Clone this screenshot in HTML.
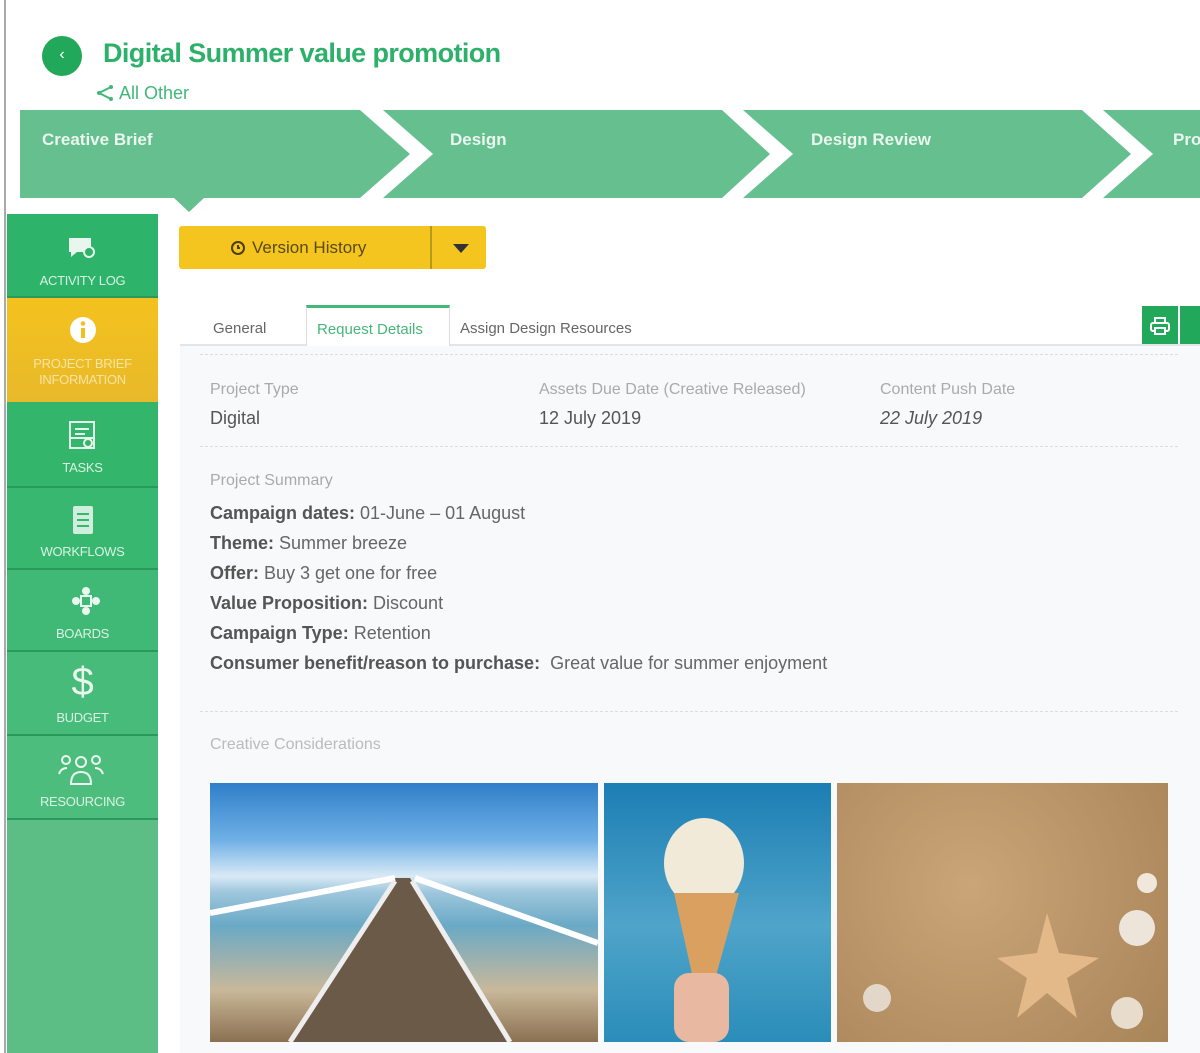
<!DOCTYPE html>
<html><head><meta charset="utf-8"><style>
*{margin:0;padding:0;box-sizing:border-box}
body{width:1200px;height:1053px;overflow:hidden;background:#fff;font-family:"Liberation Sans",sans-serif;position:relative}
.a{position:absolute}
.side{left:7px;width:151px;color:#d9f2e2;text-align:center;font-size:13px;border-bottom:2px solid #2a9a5c}
.side .lb{position:absolute;left:0;right:0;letter-spacing:-0.3px}
.lbl{color:#aaa;font-size:16px}
.val{color:#555;font-size:18px}
.row{left:210px;font-size:18px;color:#666}
.row b{color:#555}
</style></head><body>
<div class="a" style="left:4px;top:0;width:2px;height:1053px;background:#aaa"></div>
<div class="a" style="left:42px;top:36px;width:40px;height:40px;border-radius:50%;background:#22a85a;color:#fff;text-align:center;line-height:38px;font-size:16px">&#8249;</div>
<div class="a" style="left:103px;top:38px;font-size:27px;font-weight:bold;color:#2db06a;letter-spacing:-0.6px">Digital Summer value promotion</div>
<div class="a" style="left:95px;top:83px;font-size:18px;color:#3fb878">
<svg width="20" height="16" viewBox="0 0 18 16" style="vertical-align:-2px"><path d="M15 2 L3 8 L15 14" stroke="#3fb878" stroke-width="2" fill="none"/><circle cx="15" cy="2" r="2" fill="#3fb878"/><circle cx="3" cy="8" r="2" fill="#3fb878"/><circle cx="15" cy="14" r="2" fill="#3fb878"/></svg> All Other</div>
<svg class="a" style="left:0;top:0" width="1200" height="215">
<g fill="#66bf8f">
<polygon points="20,110 360,110 410,154 360,198 20,198"/>
<polygon points="383,110 722,110 770,154 722,198 383,198 433,154"/>
<polygon points="743,110 1082,110 1131,154 1082,198 743,198 793,154"/>
<polygon points="1103,110 1200,110 1200,198 1103,198 1153,154"/>
<polygon points="174,198 204,198 189,212"/>
</g>
<g fill="#eaf6ef" font-size="17" font-weight="bold" font-family="Liberation Sans">
<text x="42" y="145">Creative Brief</text><text x="450" y="145">Design</text><text x="811" y="145">Design Review</text><text x="1173" y="145">Pro</text></g>
</svg>
<div class="a" style="left:7px;top:214px;width:151px;height:839px;background:#5dbe85"></div>
<div class="a side" style="top:214px;height:84px;background:#2db36a"><svg class="a" style="left:60px;top:22px" width="30" height="24"><path d="M2 2h22v14H10l-6 5v-5H2z" fill="#e8f6ee"/><circle cx="22" cy="16" r="5" fill="#2db36a" stroke="#e8f6ee" stroke-width="2"/></svg><div class="lb" style="top:59px">ACTIVITY LOG</div></div>
<div class="a side" style="top:298px;height:104px;background:linear-gradient(#f4c21e,#e8b92a);color:#f8e3a0;border-bottom:0"><svg class="a" style="left:62px;top:18px" width="28" height="28"><circle cx="14" cy="14" r="13" fill="#fff"/><rect x="12" y="12" width="4" height="10" fill="#f2bf1f"/><circle cx="14" cy="7.5" r="2.3" fill="#f2bf1f"/></svg><div class="lb" style="top:58px;line-height:16px">PROJECT BRIEF<br>INFORMATION</div></div>
<div class="a side" style="top:402px;height:86px;background:#33b56c"><svg class="a" style="left:60px;top:18px" width="30" height="32" fill="none" stroke="#e6f5ec" stroke-width="2"><rect x="3" y="2" width="24" height="26"/><path d="M8 9h14M8 14h10M3 18h24"/><circle cx="21" cy="23" r="4"/></svg><div class="lb" style="top:58px">TASKS</div></div>
<div class="a side" style="top:488px;height:82px;background:#38b770"><svg class="a" style="left:64px;top:16px" width="24" height="32"><rect x="2" y="2" width="20" height="28" rx="2" fill="#cfeedb"/><path d="M6 10h12M6 16h12M6 22h12" stroke="#38b770" stroke-width="2"/></svg><div class="lb" style="top:56px">WORKFLOWS</div></div>
<div class="a side" style="top:570px;height:82px;background:#3fb975"><svg class="a" style="left:64px;top:16px" width="30" height="30" fill="#eaf7ef"><circle cx="15" cy="5" r="4"/><circle cx="15" cy="25" r="4"/><circle cx="5" cy="15" r="4"/><circle cx="25" cy="15" r="4"/><rect x="10" y="10" width="10" height="10" fill="none" stroke="#eaf7ef" stroke-width="2"/></svg><div class="lb" style="top:56px">BOARDS</div></div>
<div class="a side" style="top:652px;height:84px;background:#46bb7a"><div class="lb" style="top:8px;font-size:40px;color:#eaf7ef;font-weight:100">$</div><div class="lb" style="top:58px">BUDGET</div></div>
<div class="a side" style="top:736px;height:84px;background:#4dbd7e"><svg class="a" style="left:50px;top:18px" width="48" height="32" fill="none" stroke="#eaf7ef" stroke-width="2"><circle cx="9" cy="6" r="4"/><circle cx="24" cy="8" r="5"/><circle cx="39" cy="6" r="4"/><path d="M2 20q2-6 8-6M46 20q-2-6-8-6M14 30q0-12 10-12t10 12z"/></svg><div class="lb" style="top:58px">RESOURCING</div></div>
<div class="a" style="left:179px;top:226px;width:307px;height:43px;background:#f5c51f;border-radius:3px"></div>
<div class="a" style="left:430px;top:226px;width:2px;height:43px;background:#b59a1b"></div>
<svg class="a" style="left:230px;top:240px" width="16" height="16" fill="none" stroke="#4a3d10" stroke-width="2"><circle cx="8" cy="8" r="6"/><path d="M8 5v3h2"/></svg>
<div class="a" style="left:252px;top:238px;font-size:17px;color:#5a4a12">Version History</div>
<div class="a" style="left:453px;top:244px;width:0;height:0;border-left:8px solid transparent;border-right:8px solid transparent;border-top:9px solid #333"></div>
<div class="a" style="left:180px;top:344px;width:1020px;height:709px;background:#f8f9fa;border-top:2px solid #e3e6e8"></div>
<div class="a" style="left:213px;top:320px;font-size:15px;color:#666">General</div>
<div class="a" style="left:306px;top:305px;width:144px;height:41px;background:#fff;border:1px solid #ddd;border-top:3px solid #44b877;border-bottom:0"></div>
<div class="a" style="left:317px;top:321px;font-size:15px;color:#47b67a">Request Details</div>
<div class="a" style="left:460px;top:320px;font-size:15px;color:#666">Assign Design Resources</div>
<div class="a" style="left:1142px;top:306px;width:36px;height:38px;background:#22a85a"></div>
<div class="a" style="left:1180px;top:306px;width:20px;height:38px;background:#22a85a"></div>
<svg class="a" style="left:1150px;top:317px" width="20" height="18" fill="none" stroke="#fff" stroke-width="2"><rect x="5" y="1" width="10" height="5"/><rect x="1" y="6" width="18" height="8" rx="2"/><rect x="5" y="11" width="10" height="6" fill="#22a85a"/></svg>
<div class="a" style="left:200px;top:354px;width:978px;border-top:1px dashed #ddd"></div>
<div class="a lbl" style="left:210px;top:381px">Project Type</div>
<div class="a val" style="left:210px;top:408px">Digital</div>
<div class="a lbl" style="left:539px;top:381px">Assets Due Date (Creative Released)</div>
<div class="a val" style="left:539px;top:408px">12 July 2019</div>
<div class="a lbl" style="left:880px;top:381px">Content Push Date</div>
<div class="a val" style="left:880px;top:408px;font-style:italic">22 July 2019</div>
<div class="a" style="left:200px;top:446px;width:978px;border-top:1px dashed #ddd"></div>
<div class="a lbl" style="left:210px;top:472px">Project Summary</div>
<div class="a row" style="top:503px"><b>Campaign dates:</b> 01-June – 01 August</div>
<div class="a row" style="top:533px"><b>Theme:</b> Summer breeze</div>
<div class="a row" style="top:563px"><b>Offer:</b> Buy 3 get one for free</div>
<div class="a row" style="top:593px"><b>Value Proposition:</b> Discount</div>
<div class="a row" style="top:623px"><b>Campaign Type:</b> Retention</div>
<div class="a row" style="top:653px"><b>Consumer benefit/reason to purchase:</b>&nbsp; Great value for summer enjoyment</div>
<div class="a" style="left:200px;top:711px;width:978px;border-top:1px dashed #ddd"></div>
<div class="a lbl" style="left:210px;top:736px;color:#bbb">Creative Considerations</div>
<div class="a" style="left:210px;top:783px;width:388px;height:259px;background:linear-gradient(#2f7fc9 0%,#6fb0e6 22%,#d9e9f5 36%,#9fc7dd 42%,#6aa9c6 55%,#c9b89a 80%,#8a7050 100%)"></div>
<svg class="a" style="left:210px;top:783px" width="388" height="259"><polygon points="185,95 200,95 300,259 80,259" fill="#6c5a48"/><path d="M0 130 L185 95 M388 160 L205 95" stroke="#fff" stroke-width="6"/><path d="M80 259 L185 98 M300 259 L202 98" stroke="#eee" stroke-width="5"/></svg>
<div class="a" style="left:604px;top:783px;width:227px;height:259px;background:linear-gradient(#1c7eb4,#4fa4c9 55%,#2a8db9)"></div>
<svg class="a" style="left:604px;top:783px" width="227" height="259"><ellipse cx="100" cy="80" rx="40" ry="45" fill="#f2ead8"/><polygon points="70,110 135,110 110,200 90,200" fill="#d9a060"/><rect x="70" y="190" width="55" height="69" rx="15" fill="#e8b9a0"/></svg>
<div class="a" style="left:837px;top:783px;width:331px;height:259px;background:radial-gradient(circle at 40% 40%,#c9a577,#a88459)"></div>
<svg class="a" style="left:837px;top:783px" width="331" height="259"><polygon points="210,130 222,170 262,175 230,195 240,235 210,210 180,235 190,195 160,175 200,170" fill="#e3b98a"/><circle cx="300" cy="145" r="18" fill="#eee5da"/><circle cx="290" cy="230" r="16" fill="#e8dccd"/><circle cx="40" cy="215" r="14" fill="#e3d7c9"/><circle cx="310" cy="100" r="10" fill="#f0e8dc"/></svg>
</body></html>
